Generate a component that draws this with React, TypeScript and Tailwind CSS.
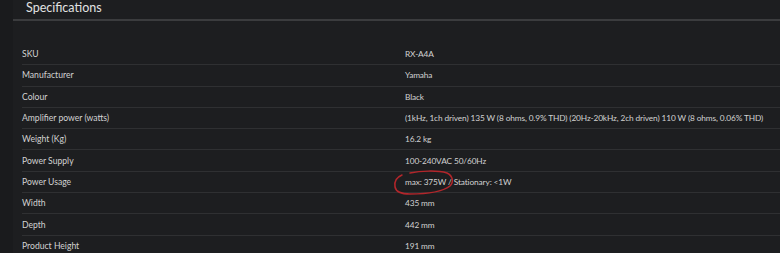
const specs: [string, string][] = [
  ["SKU", "RX-A4A"],
  ["Manufacturer", "Yamaha"],
  ["Colour", "Black"],
  ["Amplifier power (watts)", "(1kHz, 1ch driven) 135 W (8 ohms, 0.9% THD) (20Hz-20kHz, 2ch driven) 110 W (8 ohms, 0.06% THD)"],
  ["Weight (Kg)", "16.2 kg"],
  ["Power Supply", "100-240VAC 50/60Hz"],
  ["Power Usage", "max: 375W / Stationary: <1W"],
  ["Width", "435 mm"],
  ["Depth", "442 mm"],
  ["Product Height", "191 mm"],
];

export default function App() {
  return (
    <div className="w-[780px] h-[253px] overflow-hidden bg-[#1a1b1d] font-['Lato',sans-serif] relative">
      <div className="ml-[13px] bg-[#1d1e20] h-full">
        <h2 className="h-[21px] pl-[13px] text-[12.5px] leading-[15px] text-[#e2e2e2] border-b-2 border-[#3b3c3e]">
          Specifications
        </h2>
        <div className="pl-[9px] pt-[23px]">
          {specs.map(([label, value], i) => (
            <div
              key={label}
              className={`flex h-[21.3px] items-center leading-[12px] text-[#d2d2d2] whitespace-nowrap ${
                i < specs.length - 1 ? "border-b border-[#2f3032]" : ""
              }`}
            >
              <div className="w-[383px] shrink-0 text-[8.6px]">{label}</div>
              <div className="text-[8.3px] tracking-[-0.12px]">{value}</div>
            </div>
          ))}
        </div>
      </div>
      <svg className="absolute left-[392px] top-[169px]" width="66" height="32" viewBox="0 0 66 32">
        <path
          d="M10 6 C5 8 2 12 3 18 C4 23 9 25 18 25 C32 25 50 23 58 17 C62 13 61 7 55 4 C45 1 28 2 18 4"
          fill="none"
          stroke="#b3262b"
          strokeWidth="1.5"
          strokeLinecap="round"
        />
      </svg>
    </div>
  );
}
